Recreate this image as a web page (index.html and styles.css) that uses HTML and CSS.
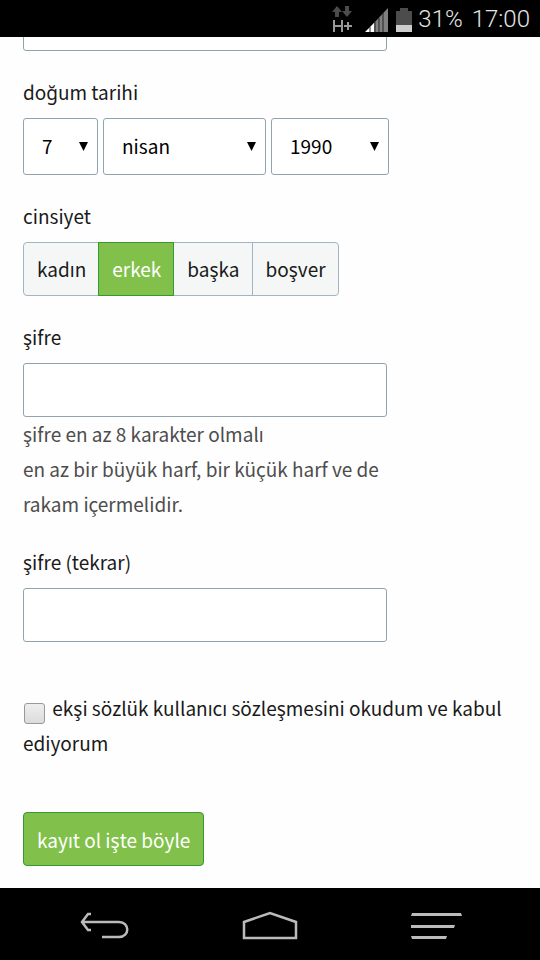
FILE: index.html
```html
<!DOCTYPE html>
<html lang="tr">
<head>
  <meta charset="UTF-8">
  <meta name="viewport" content="width=device-width, initial-scale=1.0">
  <title>ekşi sözlük - kayıt ol</title>
  <link rel="stylesheet" href="styles.css">
</head>
<body>
  <header class="status-bar">
    <svg class="status-network" width="22" height="28" viewBox="0 0 22 28">
      <path fill="#4c4c4c" d="M5 0l5 6H7v5H3V6H0zM13 0h4v5h3l-5 6-5-6h3z"/>
      <path fill="none" stroke="#999" stroke-width="2" d="M2 14v12M10 14v12M2 20h8M12 20h8M16 16v8"/>
    </svg>
    <svg class="status-signal" width="23" height="24" viewBox="0 0 23 24">
      <path fill="#808080" d="M8 16L23 0v24H8z"/>
      <path fill="#fff" d="M0 24l9-9v9z"/>
      <path stroke="#222" stroke-width="1" d="M5 19v5M10 14v10M14 10v14M18 5v19"/>
    </svg>
    <svg class="status-battery" width="16" height="24" viewBox="0 0 16 24">
      <path fill="#4c4c4c" d="M4 0h8v3h4v14H0V3h4z"/>
      <path fill="#ccc" d="M0 17h16v7H0z"/>
    </svg>
    <span class="status-percent">31%</span>
    <span class="status-time">17:00</span>
  </header>

  <main class="content">
    <form class="register-form">
      <input class="text-input first-input" type="text" aria-label="e-mail">

      <div class="field">
        <label for="day">doğum tarihi</label>
        <div class="birthdate">
          <span class="select day">
            <select id="day"><option>7</option></select>
          </span>
          <span class="select month">
            <select aria-label="ay"><option>nisan</option></select>
          </span>
          <span class="select year">
            <select aria-label="yıl"><option>1990</option></select>
          </span>
        </div>
      </div>

      <fieldset class="field">
        <legend>cinsiyet</legend>
        <div class="gender">
          <label><input type="radio" name="gender"><span>kadın</span></label>
          <label><input type="radio" name="gender" checked><span>erkek</span></label>
          <label><input type="radio" name="gender"><span>başka</span></label>
          <label><input type="radio" name="gender"><span>boşver</span></label>
        </div>
      </fieldset>

      <div class="field">
        <label for="password">şifre</label>
        <input class="text-input" id="password" type="password">
        <p class="hint">şifre en az 8 karakter olmalı<br>en az bir büyük harf, bir küçük harf ve de rakam içermelidir.</p>
      </div>

      <div class="field">
        <label for="password-again">şifre (tekrar)</label>
        <input class="text-input" id="password-again" type="password">
      </div>

      <div class="agreement">
        <input type="checkbox" id="agreement">
        <label for="agreement">ekşi sözlük kullanıcı sözleşmesini okudum ve kabul ediyorum</label>
      </div>

      <button class="submit" type="submit">kayıt ol işte böyle</button>
    </form>
  </main>

  <nav class="nav-bar">
    <button type="button" aria-label="geri">
      <svg width="52" height="30" viewBox="0 0 52 30">
        <path fill="none" stroke="#bbb" stroke-width="2.500" d="M13 3h-3L4 11l6 8h3M4 11h37c11 0 11 15 0 15H24"/>
      </svg>
    </button>
    <button type="button" aria-label="ana ekran">
      <svg width="56" height="30" viewBox="0 0 56 30">
        <path fill="none" stroke="#bbb" stroke-width="2.500" d="M2 11l26-9 26 9v16H2z"/>
      </svg>
    </button>
    <button type="button" aria-label="menü">
      <svg width="52" height="30" viewBox="0 0 52 30">
        <path fill="#bbb" d="M2 2h49l1 3H1zM1 14h44l-1 3H1zM1 25h36l-1 3H2z"/>
      </svg>
    </button>
  </nav>
</body>
</html>
```

FILE: styles.css
```css
* {
  box-sizing: border-box;
}
body {
  margin: 0;
  min-height: 100vh;
  display: flex;
  flex-direction: column;
  background: #fefefe;
  color: #1a1a1a;
  font-family: 'Noto Sans CJK JP', 'Noto Sans', sans-serif;
  font-size: 19px;
  line-height: 35px;
}
input, select, button {
  font: inherit;
  color: inherit;
}

/* status bar */
.status-bar {
  display: flex;
  align-items: center;
  justify-content: flex-end;
  height: 37px;
  padding: 2px 10px 0 0;
  background: #000;
  color: #e6e6e6;
  font-family: Roboto, sans-serif;
  font-size: 24px;
  font-weight: 300;
}
.status-network {
  margin-right: 11px;
}
.status-signal {
  margin-right: 8px;
}
.status-battery {
  margin-right: 6px;
}
.status-percent {
  margin-right: 9px;
}

/* form */
.content {
  flex: 1;
  overflow: hidden;
  padding: 0 23px 22px;
}
.text-input {
  display: block;
  width: 100%;
  max-width: 364px;
  height: 54px;
  padding: 0 13px;
  border: 1px solid #90a4ae;
  border-radius: 3px;
  background: #fff;
}
.first-input {
  margin-top: -40px;
}
.field {
  margin: 23px 0 0;
  padding: 0;
  border: 0;
}
.field > label,
.field > legend {
  display: block;
  padding: 0;
  margin-bottom: 9px;
}
.birthdate {
  display: flex;
  gap: 5px;
  max-width: 366px;
}
.select {
  position: relative;
}
.select::after {
  content: "";
  position: absolute;
  top: 24px;
  right: 10px;
  width: 9px;
  height: 9px;
  background: #000;
  clip-path: polygon(0 0, 100% 0, 50% 100%);
  pointer-events: none;
}
.select select {
  appearance: none;
  display: block;
  width: 100%;
  height: 57px;
  padding: 0 18px 2px;
  border: 1px solid #90a4ae;
  border-radius: 3px;
  background: #fff;
  color: #000;
}
.day {
  width: 75px;
}
.month {
  flex: 1;
}
.year {
  width: 118px;
}
.gender {
  display: flex;
}
.gender label {
  position: relative;
  margin-right: -1px;
}
.gender input {
  position: absolute;
  opacity: 0;
}
.gender span {
  display: block;
  height: 54px;
  padding: 0 12px 0 13px;
  border: 1px solid #a3b4c2;
  background: #f5f7f7;
  line-height: 52px;
}
.gender label:first-child span {
  border-radius: 4px 0 0 4px;
}
.gender label:last-child span {
  border-radius: 0 4px 4px 0;
}
.gender input:checked + span {
  position: relative;
  z-index: 1;
  border-color: #339933;
  background: #81c14b;
  color: #fff;
}
.hint {
  max-width: 364px;
  margin: -1px 0 0;
  color: #4d4d4d;
}
.agreement {
  margin: 48px 0 52px;
}
.agreement input {
  appearance: none;
  width: 21px;
  height: 21px;
  margin: 0 3px 0 1px;
  border: 1px solid #999;
  border-radius: 3px;
  background: linear-gradient(#eee, #dcdcdc);
  vertical-align: -8px;
}
.submit {
  height: 54px;
  padding: 0 13px;
  border: 1px solid #339933;
  border-radius: 4px;
  background: #81c14b;
  color: #fff;
}

/* navigation bar */
.nav-bar {
  display: flex;
  justify-content: space-between;
  align-items: center;
  height: 72px;
  padding: 4px 78px 0;
  background: #000;
}
.nav-bar button {
  padding: 0;
  border: 0;
  background: none;
}
.nav-bar svg {
  display: block;
}
```
